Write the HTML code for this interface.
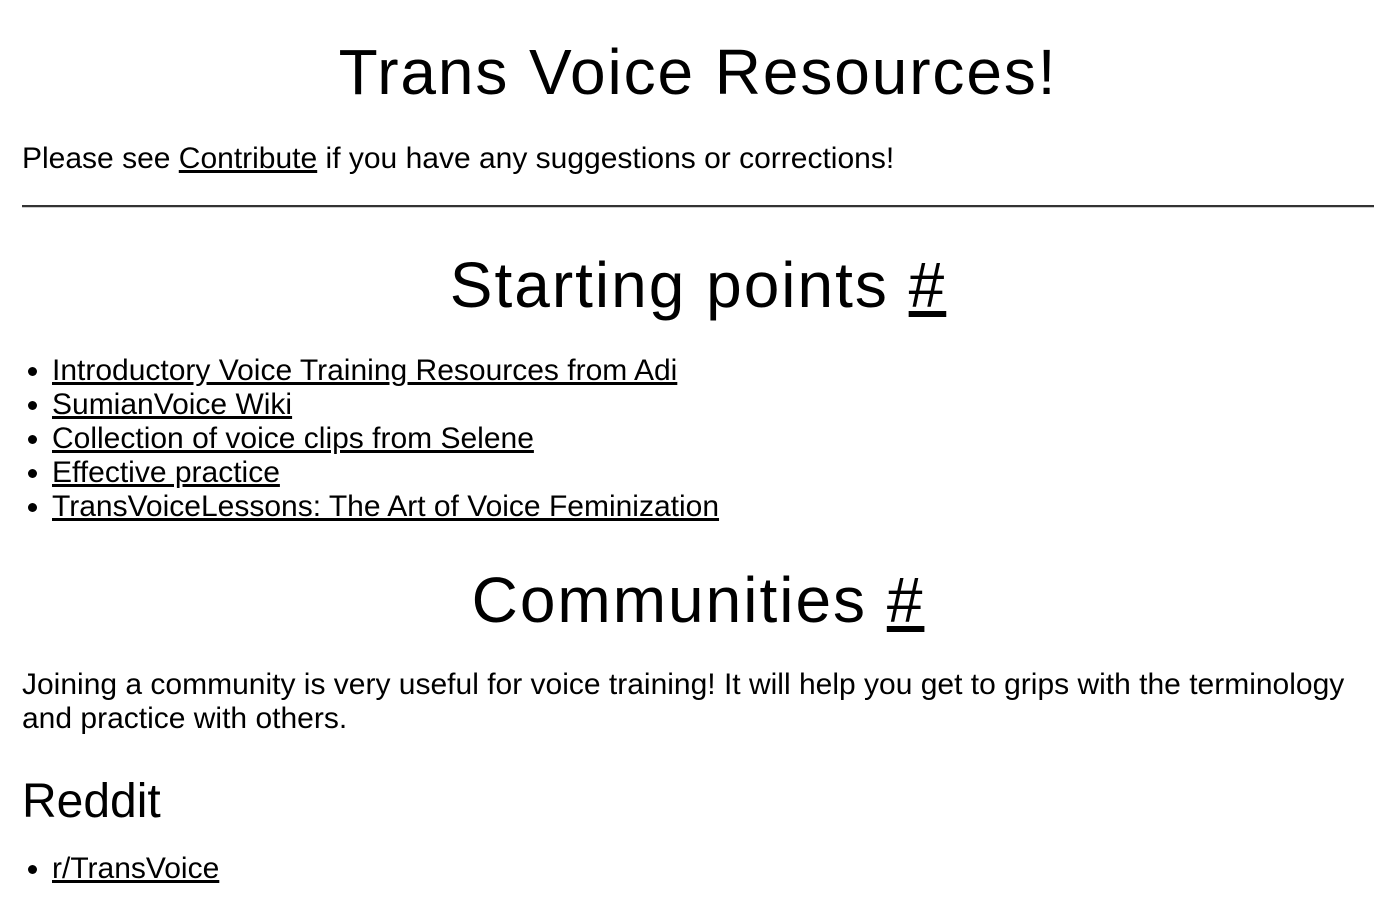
<!DOCTYPE html>
<html><head><meta charset="utf-8"><style>
html,body{margin:0;padding:0;background:#fff;}
body{padding:0 22px;font-family:"Liberation Sans",Arial,sans-serif;color:#000;font-size:30px;line-height:34px;overflow:hidden;height:868px;}
a{color:#000;text-decoration:underline;}
h1{font-weight:normal;font-size:64px;line-height:74px;margin:35px 0 0;text-align:center;letter-spacing:1.9px;}
h2{font-weight:normal;font-size:64px;line-height:74px;text-align:center;letter-spacing:2px;margin:0;}
p{margin:0;}
hr{margin:29px 0 0;border:0;border-top:2px solid #333;border-bottom:1px solid #ccc;height:0;}
ul{margin:0;padding-left:30px;}
h3{font-weight:normal;font-size:48px;line-height:54px;margin:39px 0 0;}
</style></head><body>
<h1>Trans Voice Resources!</h1>
<p style="margin-top:33px">Please see <a href="#">Contribute</a> if you have any suggestions or corrections!</p>
<hr>
<h2 style="margin-top:40px">Starting points <a href="#">#</a></h2>
<ul style="margin-top:32px">
<li><a href="#">Introductory Voice Training Resources from Adi</a></li>
<li><a href="#">SumianVoice Wiki</a></li>
<li><a href="#">Collection of voice clips from Selene</a></li>
<li><a href="#">Effective practice</a></li>
<li><a href="#">TransVoiceLessons: The Art of Voice Feminization</a></li>
</ul>
<h2 style="margin-top:39px">Communities <a href="#">#</a></h2>
<p style="margin-top:31px">Joining a community is very useful for voice training! It will help you get to grips with the terminology and practice with others.</p>
<h3>Reddit</h3>
<ul style="margin-top:23px"><li><a href="#">r/TransVoice</a></li></ul>
</body></html>
